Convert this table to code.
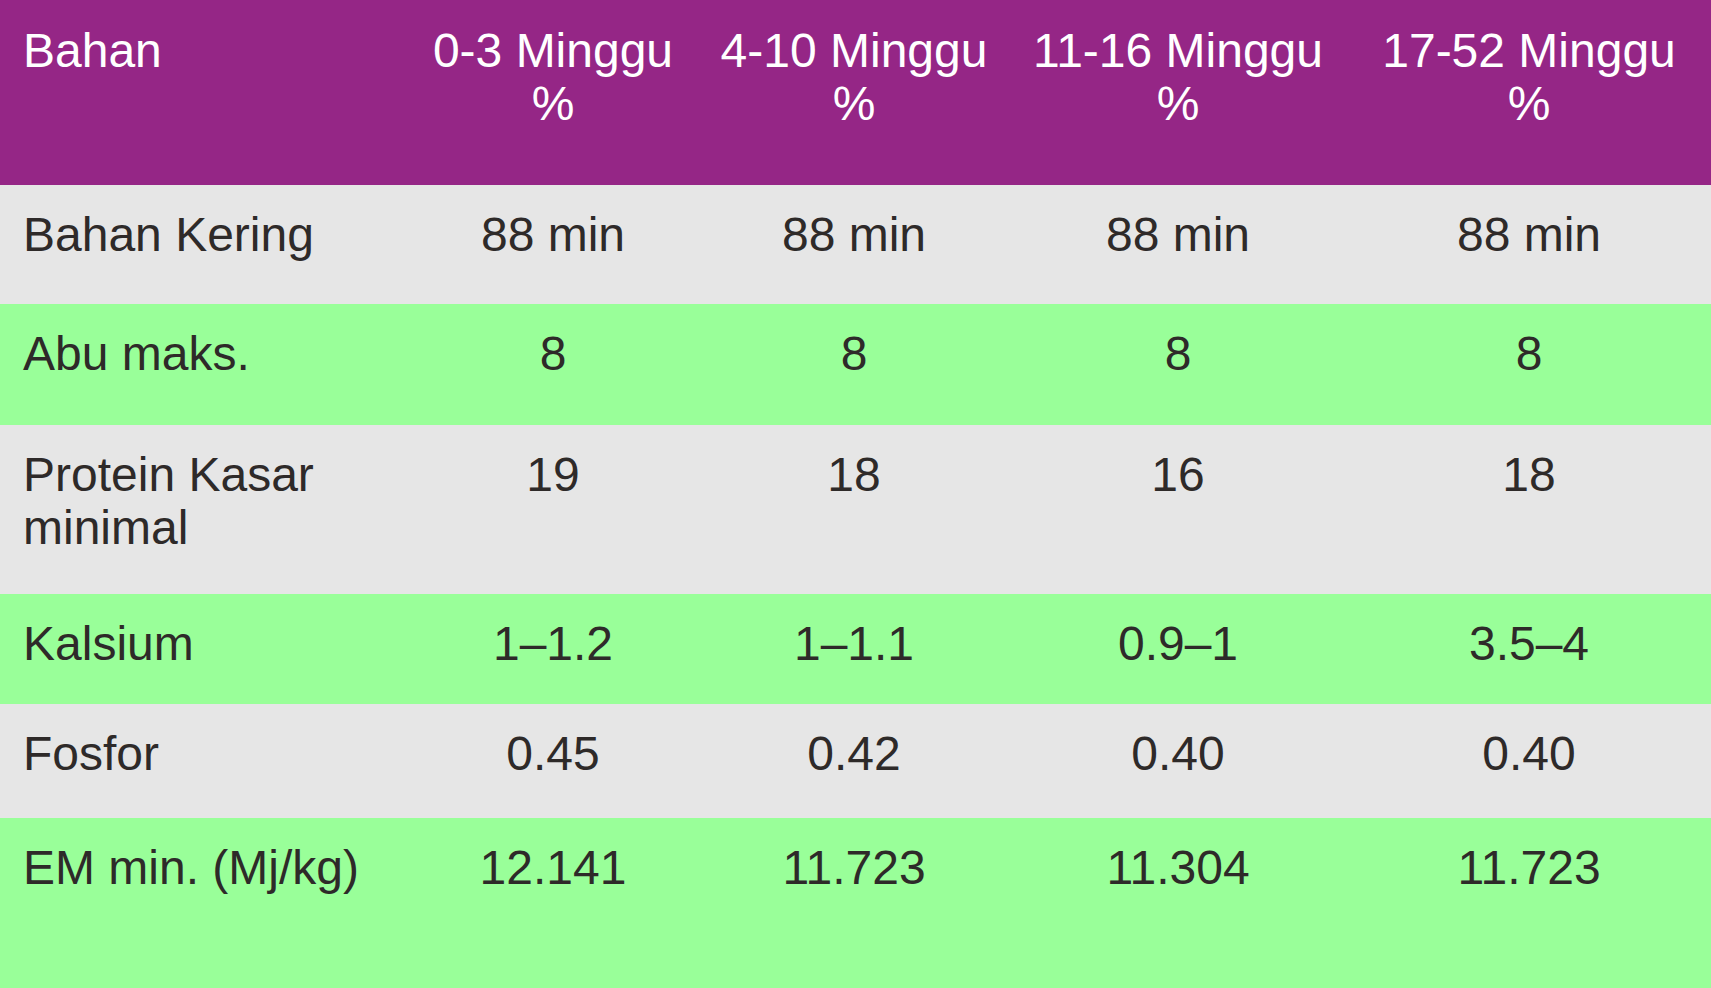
const header = ["0-3 Minggu", "4-10 Minggu", "11-16 Minggu", "17-52 Minggu"]

const rows = [
  { label: ["Bahan Kering"], values: ["88 min", "88 min", "88 min", "88 min"], bg: "bg-[#e6e6e6]", h: "h-[119px]" },
  { label: ["Abu maks."], values: ["8", "8", "8", "8"], bg: "bg-[#99ff99]", h: "h-[121px]" },
  { label: ["Protein Kasar", "minimal"], values: ["19", "18", "16", "18"], bg: "bg-[#e6e6e6]", h: "h-[169px]" },
  { label: ["Kalsium"], values: ["1–1.2", "1–1.1", "0.9–1", "3.5–4"], bg: "bg-[#99ff99]", h: "h-[110px]" },
  { label: ["Fosfor"], values: ["0.45", "0.42", "0.40", "0.40"], bg: "bg-[#e6e6e6]", h: "h-[114px]" },
  { label: ["EM min. (Mj/kg)"], values: ["12.141", "11.723", "11.304", "11.723"], bg: "bg-[#99ff99]", h: "h-[170px]" },
]

const cols = "grid grid-cols-[407px_292px_310px_338px_364px]"

export default function App() {
  return (
    <div className="w-[1711px] h-[988px] overflow-hidden font-['Liberation_Sans',Arial,sans-serif] text-[48px] leading-[53px] text-[#2e2a29]">
      {/* HEADER */}
      <div className={`${cols} h-[185px] bg-[#952686] text-white`}>
        <div className="pl-[23px] pt-[24px]">Bahan</div>
        {header.map((h) => (
          <div key={h} className="pt-[24px] text-center whitespace-nowrap">
            {h}
            <br />%
          </div>
        ))}
      </div>

      {/* ROWS */}
      {rows.map((r) => (
        <div key={r.label[0]} className={`${cols} ${r.h} ${r.bg}`}>
          <div className="pl-[23px] pt-[23px]">
            {r.label.map((l) => (
              <div key={l}>{l}</div>
            ))}
          </div>
          {r.values.map((v, i) => (
            <div key={i} className="pt-[23px] text-center">
              {v}
            </div>
          ))}
        </div>
      ))}
    </div>
  )
}
